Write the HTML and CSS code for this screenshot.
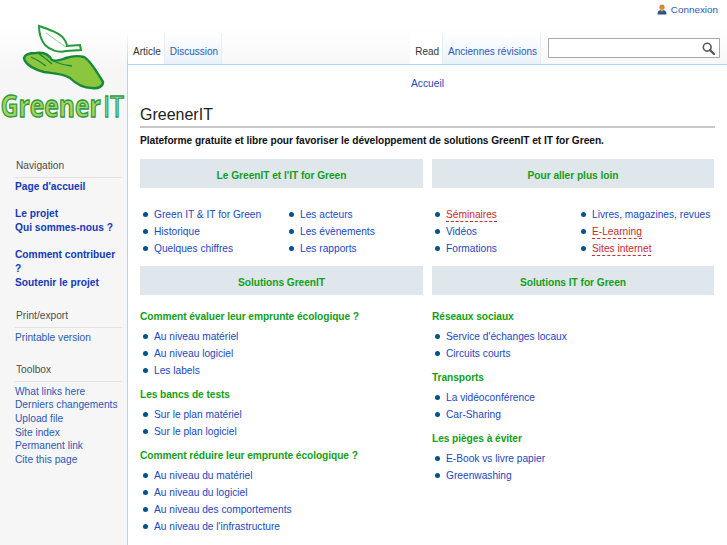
FILE: index.html
```html
<!DOCTYPE html>
<html lang="fr">
<head>
<meta charset="utf-8">
<title>GreenerIT</title>
<link rel="stylesheet" href="styles.css">
</head>
<body>
<div class="page">
  <aside class="sidebar">
    <svg class="logo" width="127" height="105" viewBox="0 20 127 105" xmlns="http://www.w3.org/2000/svg">
      <path class="leaf" d="M39 26 C50 30 60 33 64 39 C66 42 67 44 67 46 L80 45 L81 50 L66 51 C58 53 50 50 45 45 C41 40 39 33 39 26 Z"/>
      <path class="vein" d="M46 33 C53 38 60 43 66 47"/>
      <path class="hand" d="M24 58 C25 54 31 53 36 53 C42 52 48 53 52 60 C55 62 60 60 66 58 C72 56 80 56 84 57 C90 60 97 72 103 82 C103 86 99 89 92 88 C84 88 76 84 70 78 C62 73 50 73 44 72 C36 70 25 65 24 58 Z"/>
      <path class="finger" d="M31 57 C36 59 41 62 46 66 M39 54 C44 57 48 60 52 64 M54 61 C61 65 66 65 72 66"/>
      <g transform="scale(0.82 1)">
        <text class="logo-text" x="1" y="117">Greener</text>
        <text class="logo-text logo-it" x="126" y="117">IT</text>
      </g>
    </svg>
    <nav class="portal">
      <h5>Navigation</h5>
      <ul class="strong">
        <li><a href="#">Page d'accueil</a></li>
        <li class="blank">&nbsp;</li>
        <li><a href="#">Le projet</a></li>
        <li><a href="#">Qui sommes-nous ?</a></li>
        <li class="blank">&nbsp;</li>
        <li><a href="#">Comment contribuer ?</a></li>
        <li><a href="#">Soutenir le projet</a></li>
      </ul>
    </nav>
    <nav class="portal">
      <h5>Print/export</h5>
      <ul>
        <li><a href="#">Printable version</a></li>
      </ul>
    </nav>
    <nav class="portal">
      <h5>Toolbox</h5>
      <ul>
        <li><a href="#">What links here</a></li>
        <li><a href="#">Derniers changements</a></li>
        <li><a href="#">Upload file</a></li>
        <li><a href="#">Site index</a></li>
        <li><a href="#">Permanent link</a></li>
        <li><a href="#">Cite this page</a></li>
      </ul>
    </nav>
  </aside>
  <div class="main">
    <div class="personal">
      <svg class="user-icon" width="10" height="11" viewBox="0 0 10 11" xmlns="http://www.w3.org/2000/svg">
        <path d="M0.5 10.5 C0.5 7 2 6 5 6 C8 6 9.5 7 9.5 10.5 Z" fill="#2f5288"/>
        <path d="M3.5 6 L6.5 6 L5 8 Z" fill="#e0a050"/>
        <circle cx="5" cy="3.2" r="2.6" fill="#d08a30"/>
      </svg>
      <a href="#">Connexion</a>
    </div>
    <div class="tabbar">
      <div class="tabs">
        <a class="tab selected" href="#">Article</a>
        <a class="tab" href="#">Discussion</a>
      </div>
      <div class="tabs right">
        <a class="tab selected" href="#">Read</a>
        <a class="tab" href="#">Anciennes révisions</a>
        <form class="search">
          <svg width="13" height="13" viewBox="0 0 13 13" xmlns="http://www.w3.org/2000/svg">
            <circle cx="5.2" cy="5.2" r="3.9" fill="none" stroke="#555" stroke-width="1.6"/>
            <path d="M8 8 L12 12" stroke="#555" stroke-width="2.2" stroke-linecap="round"/>
          </svg>
        </form>
      </div>
    </div>
    <main class="content">
      <div class="crumb"><a href="#">Accueil</a></div>
      <h1>GreenerIT</h1>
      <p class="intro">Plateforme gratuite et libre pour favoriser le développement de solutions GreenIT et IT for Green.</p>
      <div class="board">
        <section>
          <h2>Le GreenIT et l'IT for Green</h2>
          <div class="split">
            <ul>
              <li><a href="#">Green IT &amp; IT for Green</a></li>
              <li><a href="#">Historique</a></li>
              <li><a href="#">Quelques chiffres</a></li>
            </ul>
            <ul>
              <li><a href="#">Les acteurs</a></li>
              <li><a href="#">Les évènements</a></li>
              <li><a href="#">Les rapports</a></li>
            </ul>
          </div>
        </section>
        <section>
          <h2>Pour aller plus loin</h2>
          <div class="split">
            <ul>
              <li><a class="missing" href="#">Séminaires</a></li>
              <li><a href="#">Vidéos</a></li>
              <li><a href="#">Formations</a></li>
            </ul>
            <ul>
              <li><a href="#">Livres, magazines, revues</a></li>
              <li><a class="missing" href="#">E-Learning</a></li>
              <li><a class="missing" href="#">Sites internet</a></li>
            </ul>
          </div>
        </section>
        <section>
          <h2>Solutions GreenIT</h2>
          <h3>Comment évaluer leur emprunte écologique ?</h3>
          <ul>
            <li><a href="#">Au niveau matériel</a></li>
            <li><a href="#">Au niveau logiciel</a></li>
            <li><a href="#">Les labels</a></li>
          </ul>
          <h3>Les bancs de tests</h3>
          <ul>
            <li><a href="#">Sur le plan matériel</a></li>
            <li><a href="#">Sur le plan logiciel</a></li>
          </ul>
          <h3>Comment réduire leur emprunte écologique ?</h3>
          <ul>
            <li><a href="#">Au niveau du matériel</a></li>
            <li><a href="#">Au niveau du logiciel</a></li>
            <li><a href="#">Au niveau des comportements</a></li>
            <li><a href="#">Au niveau de l'infrastructure</a></li>
          </ul>
        </section>
        <section>
          <h2>Solutions IT for Green</h2>
          <h3>Réseaux sociaux</h3>
          <ul>
            <li><a href="#">Service d'échanges locaux</a></li>
            <li><a href="#">Circuits courts</a></li>
          </ul>
          <h3>Transports</h3>
          <ul>
            <li><a href="#">La vidéoconférence</a></li>
            <li><a href="#">Car-Sharing</a></li>
          </ul>
          <h3>Les pièges à éviter</h3>
          <ul>
            <li><a href="#">E-Book vs livre papier</a></li>
            <li><a href="#">Greenwashing</a></li>
          </ul>
        </section>
      </div>
    </main>
  </div>
</div>
</body>
</html>
```

FILE: styles.css
```css
html, body {
  margin: 0;
  height: 545px;
  overflow: hidden;
}
body {
  font-family: "Liberation Sans", Arial, sans-serif;
  font-size: 10.2px;
  background: linear-gradient(#fff 28px, #f6f6f6 70px);
  color: #000;
}
a {
  color: #2148c0;
  text-decoration: none;
}
ul {
  list-style: none;
  margin: 0;
  padding: 0;
}
.page {
  display: flex;
  height: 545px;
}
.sidebar {
  width: 127px;
  flex: none;
}
.logo {
  display: block;
  margin-top: 20px;
}
.leaf {
  fill: #fff;
  stroke: #22993a;
  stroke-width: 2;
}
.vein {
  fill: none;
  stroke: #8bcf8f;
  stroke-width: 1;
}
.hand {
  fill: #8cc63f;
  stroke: #14893a;
  stroke-width: 2.4;
}
.finger {
  fill: none;
  stroke: #14893a;
  stroke-width: 1.3;
}
.logo-text {
  font-family: "Open Sans", sans-serif;
  font-size: 30px;
  font-weight: 700;
  fill: #a4d65e;
  stroke: #2d9a3e;
  stroke-width: 1.4;
}
.logo-it {
  font-weight: 400;
  fill: #d4eec4;
}
.portal {
  padding: 0 5px 0 16px;
  margin-bottom: 20px;
  line-height: 13.6px;
}
.portal:first-of-type {
  margin-top: 34px;
}
.portal + .portal {
  margin-bottom: 18px;
}
.portal h5 {
  margin: 0 0 3px -1px;
  padding: 0 0 4px 1px;
  font-size: 10.2px;
  font-weight: 400;
  color: #4d4d4d;
  border-bottom: 1px solid #e2e2e2;
  line-height: 14px;
}
.portal a {
  color: #2a58b8;
}
.portal ul {
  margin-left: -1px;
}
.portal .strong {
  margin-top: -1px;
}
.blank {
  height: 13.8px;
}
.strong a {
  color: #1339ba;
  font-weight: 700;
}
.main {
  flex: 1;
  min-width: 0;
  display: flex;
  flex-direction: column;
}
.personal {
  height: 33px;
  box-sizing: border-box;
  padding: 4px 9px 0 0;
  display: flex;
  justify-content: flex-end;
  gap: 4px;
  line-height: 12px;
  font-size: 9.9px;
}
.personal a {
  color: #2a58b8;
}
.tabbar {
  height: 31px;
  display: flex;
  justify-content: space-between;
  border-left: 1px solid;
  border-image: linear-gradient(#fff, #a7d7f9) 1;
}
.tabs {
  display: flex;
}
.right {
  padding-right: 7px;
}
.tab {
  display: block;
  padding: 13px 3px 0 5px;
  font-size: 10px;
  line-height: 12px;
  color: #2a58b8;
  border-right: 1px solid #e4eef7;
  background: linear-gradient(#fff, #e8f2f8);
}
.selected {
  color: #333;
  background: #fff;
}
.search {
  box-sizing: border-box;
  width: 172px;
  height: 20px;
  margin: 5px 0 0 7px;
  border: 1px solid #aaa;
  background: #fff;
  display: flex;
  justify-content: flex-end;
  align-items: center;
  padding-right: 4px;
}
.content {
  flex: 1;
  background: #fff;
  border-top: 1px solid #a7d7f9;
  border-left: 1px solid #a7d7f9;
  padding: 12px 12px 0 12px;
}
.crumb {
  text-align: center;
  line-height: 14px;
}
.crumb a {
  color: #2148c0;
}
h1 {
  margin: 13px 0 0;
  font-size: 16px;
  font-weight: 400;
  line-height: 22px;
  border-bottom: 2px solid #c8c8c8;
  color: #222;
}
.intro {
  margin: 6px 0 0;
  font-weight: 700;
  line-height: 14px;
  color: #111;
  letter-spacing: -0.05px;
}
.board {
  display: grid;
  grid-template-columns: 283px 282px;
  column-gap: 9px;
  margin-top: 11px;
}
h2 {
  margin: 0;
  height: 29px;
  line-height: 33px;
  text-align: center;
  font-size: 10.2px;
  font-weight: 700;
  color: #12a018;
  background: #dfe6ec;
  letter-spacing: -0.04px;
}
h3 {
  margin: 9px 0 0;
  font-size: 10.2px;
  font-weight: 700;
  line-height: 14px;
  color: #12a018;
  letter-spacing: -0.07px;
}
section > h2 + h3 {
  margin-top: 15px;
}
section ul {
  margin-top: 3.6px;
}
.split {
  display: grid;
  grid-template-columns: 146px 1fr;
  padding-top: 18px;
  height: 60px;
}
.split ul {
  margin: 0;
}
section li {
  position: relative;
  height: 17.2px;
  line-height: 17.2px;
  padding-left: 14px;
}
section li::before {
  content: "";
  position: absolute;
  left: 3px;
  top: 6px;
  width: 5px;
  height: 5px;
  border-radius: 50%;
  background: #00528c;
}
.missing {
  color: #c92a2a;
  border-bottom: 1px dashed #c92a2a;
  padding-bottom: 1px;
}
```
